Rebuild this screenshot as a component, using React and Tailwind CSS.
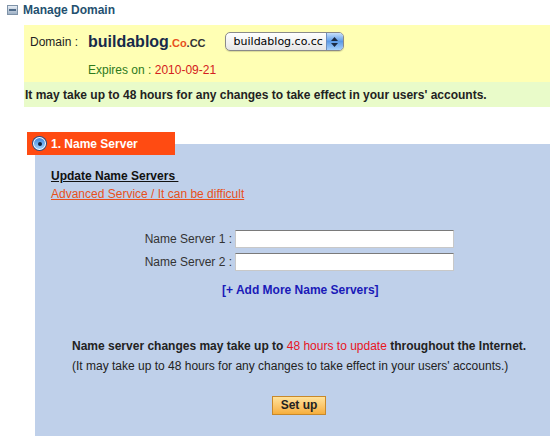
import React from 'react';

const font = { fontFamily: '"Liberation Sans", Arial, sans-serif' };

const CollapseIcon = () => (
    <div className="w-[11px] h-[10px] border border-[#7f93a8] bg-gradient-to-b from-[#e6edf5] to-[#9fb1c6] flex items-center justify-center">
        <div className="w-[7px] h-[2px] bg-[#4e6a88]"></div>
    </div>
);

const Radio = () => (
    <div className="w-[13px] h-[13px] rounded-full bg-white flex items-center justify-center shadow-[0_0_0_1px_#2a4f86]">
        <div className="w-[11px] h-[11px] rounded-full bg-gradient-to-b from-[#3f86d9] to-[#9cd0ff] flex items-center justify-center">
            <div className="w-[4px] h-[4px] rounded-full bg-[#0d2140]"></div>
        </div>
    </div>
);

const DomainSelect = () => (
    <div className="flex items-center h-[19px] w-[119px] rounded-[5px] border border-[#8a8a8a] bg-gradient-to-b from-white to-[#e6e6e6] overflow-hidden shadow-[0_1px_1px_rgba(0,0,0,0.15)]">
        <span className="flex-1 pl-[8px] text-[11px] text-black leading-none" style={{ fontFamily: '"DejaVu Sans", sans-serif' }}>buildablog.co.cc</span>
        <div className="w-[17px] h-full bg-gradient-to-b from-[#c7e0fb] via-[#5b9ae6] to-[#a6d0fa] border-l border-[#6d8fbf] flex flex-col items-center justify-center gap-[2px]">
            <svg width="7" height="4" viewBox="0 0 7 4"><path d="M0 4 L3.5 0 L7 4 Z" fill="#1a2a44" /></svg>
            <svg width="7" height="4" viewBox="0 0 7 4"><path d="M0 0 L3.5 4 L7 0 Z" fill="#1a2a44" /></svg>
        </div>
    </div>
);

export default function App() {
    return (
        <div className="w-[550px] h-[439px] bg-white overflow-hidden text-[#222]" style={font}>
            {/* header */}
            <div className="flex items-center h-[19px] pl-[7px] pt-[1px] gap-[5px]">
                <CollapseIcon />
                <span className="text-[12px] font-bold text-[#24506f]">Manage Domain</span>
            </div>

            {/* domain info */}
            <div className="ml-[24px] mt-[6px]">
                <div className="bg-[#ffffb4] h-[57px] pt-[6px]">
                    <div className="flex items-center h-[21px]">
                        <span className="w-[64px] pl-[6px] text-[12px] text-[#222]">Domain :</span>
                        <span className="text-[16px] font-bold text-[#172a4a]">buildablog</span>
                        <span className="text-[11px] font-bold text-[#e8501c] mt-[3px]">.Co</span>
                        <span className="text-[11px] font-bold text-[#333] mt-[3px]">.CC</span>
                        <div className="ml-[19px]"><DomainSelect /></div>
                    </div>
                    <div className="pl-[64px] mt-[11px] text-[12px] leading-[14px]">
                        <span className="text-[#2e7a1c]">Expires on : </span>
                        <span className="text-[#d42020]">2010-09-21</span>
                    </div>
                </div>
                <div className="bg-[#e9fbc9] h-[25px] flex items-center pl-[1px] text-[12px] font-bold text-[#222]">
                    It may take up to 48 hours for any changes to take effect in your users' accounts.
                </div>
            </div>

            {/* name server section */}
            <div className="mt-[25px]">
                <div className="relative z-10 ml-[27px] w-[148px] h-[23px] bg-[#ff4b12] flex items-center pl-[6px] gap-[5px]">
                    <Radio />
                    <span className="text-[12px] font-bold text-white">1. Name Server</span>
                </div>
                <div className="ml-[35px] -mt-[11px] h-[292px] bg-[#bfd0ea] pt-[25px]">
                    <div className="pl-[16px]">
                        <div className="text-[12px] font-bold text-[#111] underline leading-[15px]">Update Name Servers&nbsp;</div>
                        <div className="text-[12px] text-[#e8501c] underline leading-[15px] mt-[3px]">Advanced Service / It can be difficult</div>
                    </div>

                    <div className="mt-[28px] flex flex-col gap-[5px]">
                        <div className="flex items-center">
                            <span className="w-[200px] text-right pr-[3px] text-[12px] text-[#333]">Name Server 1 :</span>
                            <input className="w-[219px] h-[18px] bg-white border border-[#c8c8c8] border-t-[#7a7a7a] outline-none" />
                        </div>
                        <div className="flex items-center">
                            <span className="w-[200px] text-right pr-[3px] text-[12px] text-[#333]">Name Server 2 :</span>
                            <input className="w-[219px] h-[18px] bg-white border border-[#c8c8c8] border-t-[#7a7a7a] outline-none" />
                        </div>
                    </div>

                    <div className="ml-[187px] mt-[12px] text-[12px] font-bold text-[#1a1ab8] leading-[14px]">[+ Add More Name Servers]</div>

                    <div className="pl-[37px] mt-[39px] leading-[20px]">
                        <div className="text-[12px] font-bold text-[#222]">
                            Name server changes may take up to <span className="text-[#e8141e] font-normal">48 hours to update</span> throughout the Internet.
                        </div>
                        <div className="text-[12px] text-[#222]">(It may take up to 48 hours for any changes to take effect in your users' accounts.)</div>
                    </div>

                    <div className="ml-[237px] mt-[16px]">
                        <button className="w-[54px] h-[19px] border border-[#c8882a] bg-gradient-to-b from-[#ffe29a] to-[#f6ae3a] text-[12px] font-bold text-[#222] leading-none">Set up</button>
                    </div>
                </div>
            </div>
        </div>
    );
}
